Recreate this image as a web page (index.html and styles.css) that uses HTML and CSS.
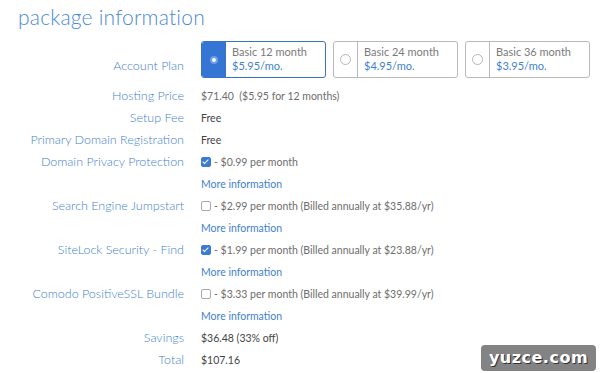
FILE: index.html
```html
<!DOCTYPE html>
<html lang="en">
  <head>
    <meta charset="UTF-8" />
    <title>package information</title>
    <link rel="stylesheet" href="styles.css">
  </head>
  <body>
    <div class="container">
      <h1>package information</h1>

      <div class="row row-plan">
        <div class="label">Account Plan</div>
        <div class="plans">
          <div class="plan plan-active">
            <span class="plan-radio"><span class="dot"></span></span>
            <span class="plan-text">Basic 12 month<br /><em>$5.95/mo.</em></span>
          </div>
          <div class="plan">
            <span class="plan-radio"><span class="dot"></span></span>
            <span class="plan-text">Basic 24 month<br /><em>$4.95/mo.</em></span>
          </div>
          <div class="plan">
            <span class="plan-radio"><span class="dot"></span></span>
            <span class="plan-text">Basic 36 month<br /><em>$3.95/mo.</em></span>
          </div>
        </div>
      </div>

      <div class="row">
        <div class="label">Hosting Price</div>
        <div class="value">$71.40&nbsp; ($5.95 for 12 months)</div>
      </div>
      <div class="row">
        <div class="label">Setup Fee</div>
        <div class="value strong">Free</div>
      </div>
      <div class="row">
        <div class="label">Primary Domain Registration</div>
        <div class="value strong">Free</div>
      </div>
      <div class="row">
        <div class="label">Domain Privacy Protection</div>
        <div class="value"><span class="check checked"></span> - $0.99 per month</div>
      </div>
      <div class="row">
        <div class="label"></div>
        <div class="value"><a class="more">More information</a></div>
      </div>
      <div class="row">
        <div class="label">Search Engine Jumpstart</div>
        <div class="value"><span class="check"></span> - $2.99 per month (Billed annually at $35.88/yr)</div>
      </div>
      <div class="row">
        <div class="label"></div>
        <div class="value"><a class="more">More information</a></div>
      </div>
      <div class="row">
        <div class="label">SiteLock Security - Find</div>
        <div class="value"><span class="check checked"></span> - $1.99 per month (Billed annually at $23.88/yr)</div>
      </div>
      <div class="row">
        <div class="label"></div>
        <div class="value"><a class="more">More information</a></div>
      </div>
      <div class="row">
        <div class="label">Comodo PositiveSSL Bundle</div>
        <div class="value"><span class="check"></span> - $3.33 per month (Billed annually at $39.99/yr)</div>
      </div>
      <div class="row">
        <div class="label"></div>
        <div class="value"><a class="more">More information</a></div>
      </div>
      <div class="row">
        <div class="label">Savings</div>
        <div class="value strong">$36.48 (33% off)</div>
      </div>
      <div class="row">
        <div class="label">Total</div>
        <div class="value strong">$107.16</div>
      </div>
    </div>

    <div class="watermark">yuzce.com</div>
  </body>
</html>
```

FILE: styles.css
```css
body {
  font-family: "Lato", "Open Sans", sans-serif;
  background-color: #ffffff;
  margin: 0;
  padding: 0;
}
.container {
  padding: 2px 0 0 18px;
}
h1 {
  font-size: 21px;
  font-weight: 300;
  color: #4a8ad9;
  margin: 0;
  line-height: 30px;
  letter-spacing: 0.2px;
}
.row {
  display: grid;
  grid-template-columns: 166px 1fr;
  column-gap: 17px;
  line-height: 22px;
  height: 22px;
}
.label {
  text-align: right;
  font-size: 12.5px;
  font-weight: 300;
  color: #3f7fcf;
  white-space: nowrap;
}
.value {
  font-size: 10.5px;
  color: #6d6d6d;
  white-space: nowrap;
  display: flex;
  align-items: center;
  gap: 3px;
}
.value.strong {
  color: #444;
}
.more {
  color: #3f7fcf;
  font-size: 10.5px;
}
.row-plan {
  height: auto;
  margin: 9px 0 7px;
}
.row-plan .label {
  align-self: end;
  line-height: 18px;
  padding-bottom: 3px;
}
.plans {
  display: flex;
  gap: 7px;
}
.plan {
  display: flex;
  width: 123px;
  height: 35px;
  border: 1px solid #b9b9b9;
  border-radius: 3px;
  overflow: hidden;
}
.plan-radio {
  width: 23px;
  border-right: 1px solid #b9b9b9;
  display: flex;
  align-items: center;
  justify-content: center;
}
.dot {
  width: 9px;
  height: 9px;
  border: 1px solid #b5b5b5;
  border-radius: 50%;
}
.plan-active {
  border-color: #3a72c9;
}
.plan-active .plan-radio {
  background-color: #3575d3;
  border-right-color: #3a72c9;
}
.plan-active .dot {
  width: 4px;
  height: 4px;
  background-color: #ffffff;
  border: 2px solid #6f9fe6;
}
.plan-text {
  padding: 3px 0 0 6px;
  font-size: 11px;
  line-height: 14px;
  color: #7a7a7a;
}
.plan-text em {
  font-style: normal;
  color: #3f7fcf;
}
.check {
  display: inline-block;
  width: 8px;
  height: 8px;
  border: 1px solid #a8a8a8;
  border-radius: 2px;
  position: relative;
}
.check.checked {
  background-color: #3a7bd5;
  border-color: #3a7bd5;
}
.check.checked::after {
  content: "";
  position: absolute;
  left: 2px;
  top: 0px;
  width: 2px;
  height: 5px;
  border: solid #fff;
  border-width: 0 1.5px 1.5px 0;
  transform: rotate(45deg);
}
.watermark {
  position: absolute;
  left: 481px;
  top: 345px;
  width: 115px;
  height: 26px;
  background-color: #838383;
  border-radius: 4px;
  color: #ffffff;
  font-family: "DejaVu Sans", sans-serif;
  font-weight: bold;
  font-size: 16px;
  line-height: 26px;
  text-align: center;
  text-shadow: 1px 1px 0 #333;
  letter-spacing: 0.5px;
}
```
